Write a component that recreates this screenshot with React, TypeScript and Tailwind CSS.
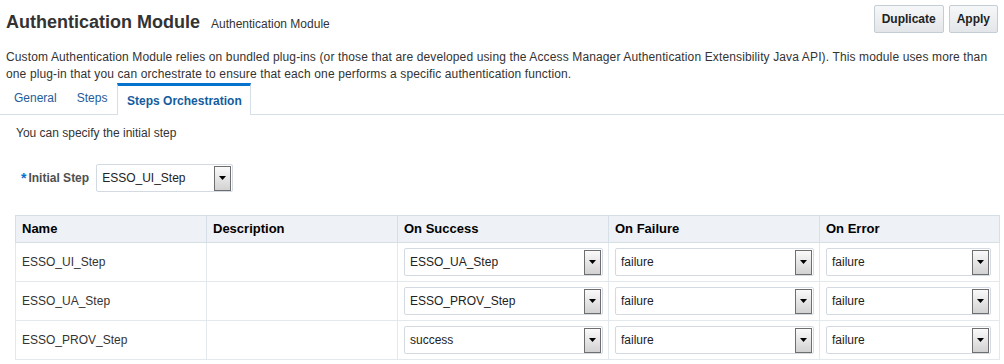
import React from "react";

type Row = {
  name: string;
  success: string;
  failure: string;
  error: string;
};

const ROWS: Row[] = [
  { name: "ESSO_UI_Step", success: "ESSO_UA_Step", failure: "failure", error: "failure" },
  { name: "ESSO_UA_Step", success: "ESSO_PROV_Step", failure: "failure", error: "failure" },
  { name: "ESSO_PROV_Step", success: "success", failure: "failure", error: "failure" },
];

function DropButton() {
  return (
    <span className="flex h-[25px] w-[17px] shrink-0 items-center justify-center border border-[#6e6e6e] bg-gradient-to-b from-[#fafafa] to-[#d2d2d2]">
      <svg width="7" height="4" viewBox="0 0 7 4">
        <path d="M0 0h7L3.5 4z" fill="#000" />
      </svg>
    </span>
  );
}

function Select({ value, className }: { value: string; className: string }) {
  return (
    <div
      className={
        "flex h-[28px] items-center justify-between rounded-[2px] border border-[#d3dae1] bg-white pl-[5px] pr-[1px] " +
        className
      }
    >
      <span className="text-[12px] text-[#222]">{value}</span>
      <DropButton />
    </div>
  );
}

export default function App() {
  return (
    <div className="h-[364px] w-[1004px] overflow-hidden bg-white font-['Liberation_Sans',Arial,sans-serif] text-[#333]">
      <div className="flex items-start justify-between pl-[6px] pr-[6px] pt-[5px]">
        <div className="flex items-baseline pt-[6px]">
          <h1 className="text-[18px] font-bold leading-[22px] text-[#333]">Authentication Module</h1>
          <span className="ml-[11px] text-[12px] text-[#333]">Authentication Module</span>
        </div>
        <div className="flex gap-[5px]">
          <button className="h-[28px] rounded-[2px] border border-[#c4ccd4] bg-gradient-to-b from-[#f6f7f8] to-[#e3e6e9] px-[7px] text-[12px] font-bold text-[#222]">
            Duplicate
          </button>
          <button className="h-[28px] rounded-[2px] border border-[#c4ccd4] bg-gradient-to-b from-[#f6f7f8] to-[#e3e6e9] px-[7px] text-[12px] font-bold text-[#222]">
            Apply
          </button>
        </div>
      </div>

      <p className="mt-[16px] px-[6px] text-[12px] leading-[17px] tracking-[0.13px] text-[#333]">
        Custom Authentication Module relies on bundled plug-ins (or those that are developed using the Access Manager Authentication Extensibility Java API). This module uses more than one plug-in that you can orchestrate to ensure that each one performs a specific authentication function.
      </p>

      <div className="flex h-[32px] items-end border-b border-[#d6dfe6]">
        <span className="mb-[7px] ml-[14px] text-[12px] text-[#1f5c99]">General</span>
        <span className="mb-[7px] ml-[20px] text-[12px] text-[#1f5c99]">Steps</span>
        <span className="relative top-[1px] ml-[10px] flex h-[32px] w-[134px] items-center justify-center border-x border-t-[3px] border-[#d6dfe6] border-t-[#0572ce] bg-white text-[12px] font-bold text-[#145c9e]">
          Steps Orchestration
        </span>
      </div>

      <div className="mt-[9px] pl-[16px] text-[12px] text-[#333]">You can specify the initial step</div>

      <div className="mt-[22px] flex items-center pl-[21px]">
        <span className="mr-[2px] text-[14px] font-bold leading-none text-[#0572ce]">*</span>
        <span className="text-[12px] font-bold text-[#4f4f4f]">Initial Step</span>
        <Select value="ESSO_UI_Step" className="ml-[7px] w-[137px]" />
      </div>

      <table className="ml-[15px] mt-[23px] w-[984px] table-fixed border-collapse border border-[#d6dfe6] text-[12px]">
        <colgroup>
          <col className="w-[191px]" />
          <col className="w-[191px]" />
          <col className="w-[211px]" />
          <col className="w-[211px]" />
          <col className="w-[180px]" />
        </colgroup>
        <thead>
          <tr className="h-[27px] bg-[#eef1f5]">
            {["Name", "Description", "On Success", "On Failure", "On Error"].map((h) => (
              <th
                key={h}
                className="border border-[#d6dfe6] pl-[6px] text-left text-[13px] font-bold text-[#000]"
              >
                {h}
              </th>
            ))}
          </tr>
        </thead>
        <tbody>
          {ROWS.map((r) => (
            <tr key={r.name} className="h-[39px]">
              <td className="border border-[#e3e8ed] pl-[6px] text-[#333]">{r.name}</td>
              <td className="border border-[#e3e8ed]"></td>
              <td className="border border-[#e3e8ed] px-[6px]">
                <Select value={r.success} className="w-[199px]" />
              </td>
              <td className="border border-[#e3e8ed] px-[6px]">
                <Select value={r.failure} className="w-[199px]" />
              </td>
              <td className="border border-[#e3e8ed] px-[6px]">
                <Select value={r.error} className="w-[165px]" />
              </td>
            </tr>
          ))}
        </tbody>
      </table>
    </div>
  );
}
